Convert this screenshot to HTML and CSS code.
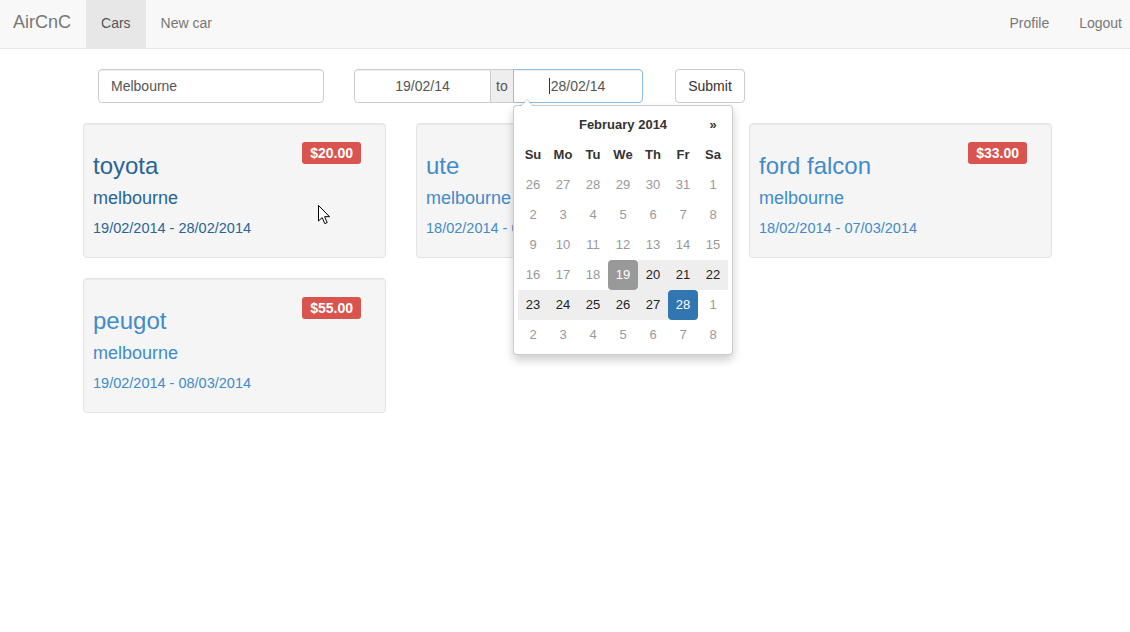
FILE: index.html
```html
<!DOCTYPE html>
<html>
<head>
<meta charset="utf-8">
<title>AirCnC</title>
<link rel="stylesheet" href="styles.css">
</head>
<body>
<nav class="navbar">
  <a class="brand" href="#">AirCnC</a>
  <ul class="nav">
    <li><a class="active" href="#">Cars</a></li>
    <li><a href="#">New car</a></li>
  </ul>
  <ul class="nav nav-right">
    <li><a href="#">Profile</a></li>
    <li><a href="#">Logout</a></li>
  </ul>
</nav>

<form class="search">
  <input class="field city" type="text" value="Melbourne">
  <div class="daterange">
    <input class="field date date-start" type="text" value="19/02/14">
    <span class="addon">to</span>
    <div class="date-end-wrap">
      <input class="field date date-end" type="text" value="28/02/14">
      <span class="caret-line"></span>
    </div>
    <div class="datepicker">
      <table>
        <colgroup><col class="day-col"><col class="day-col"><col class="day-col"><col class="day-col"><col class="day-col"><col class="day-col"><col class="day-col"></colgroup>
        <thead>
          <tr class="title-row"><th></th><th colspan="5" class="month">February 2014</th><th class="next">»</th></tr>
          <tr class="dow"><th>Su</th><th>Mo</th><th>Tu</th><th>We</th><th>Th</th><th>Fr</th><th>Sa</th></tr>
        </thead>
        <tbody>
          <tr><td class="muted">26</td><td class="muted">27</td><td class="muted">28</td><td class="muted">29</td><td class="muted">30</td><td class="muted">31</td><td class="muted">1</td></tr>
          <tr><td class="muted">2</td><td class="muted">3</td><td class="muted">4</td><td class="muted">5</td><td class="muted">6</td><td class="muted">7</td><td class="muted">8</td></tr>
          <tr><td class="muted">9</td><td class="muted">10</td><td class="muted">11</td><td class="muted">12</td><td class="muted">13</td><td class="muted">14</td><td class="muted">15</td></tr>
          <tr><td class="muted">16</td><td class="muted">17</td><td class="muted">18</td><td class="sel-start">19</td><td class="range">20</td><td class="range">21</td><td class="range">22</td></tr>
          <tr><td class="range">23</td><td class="range">24</td><td class="range">25</td><td class="range">26</td><td class="range">27</td><td class="sel-end">28</td><td class="muted">1</td></tr>
          <tr><td class="muted">2</td><td class="muted">3</td><td class="muted">4</td><td class="muted">5</td><td class="muted">6</td><td class="muted">7</td><td class="muted">8</td></tr>
        </tbody>
      </table>
    </div>
  </div>
  <button class="btn" type="button">Submit</button>
</form>

<main class="cars">
  <div class="card">
    <span class="price">$20.00</span>
    <a class="car-name hover" href="#">toyota</a>
    <a class="car-city hover" href="#">melbourne</a>
    <a class="car-dates hover" href="#">19/02/2014 - 28/02/2014</a>
    <svg class="cursor" width="13" height="20" viewBox="0 0 13 20"><path d="M0.5 0.5 L0.5 16 L4.2 12.6 L6.8 18.6 L9.2 17.6 L6.6 11.7 L11.5 11.7 Z" fill="#fff" stroke="#000" stroke-width="1"/></svg>
  </div>
  <div class="card">
    <span class="price">$45.00</span>
    <a class="car-name" href="#">ute</a>
    <a class="car-city" href="#">melbourne</a>
    <a class="car-dates" href="#">18/02/2014 - 06/03/2014</a>
  </div>
  <div class="card">
    <span class="price">$33.00</span>
    <a class="car-name" href="#">ford falcon</a>
    <a class="car-city" href="#">melbourne</a>
    <a class="car-dates" href="#">18/02/2014 - 07/03/2014</a>
  </div>
  <div class="card">
    <span class="price">$55.00</span>
    <a class="car-name" href="#">peugot</a>
    <a class="car-city" href="#">melbourne</a>
    <a class="car-dates" href="#">19/02/2014 - 08/03/2014</a>
  </div>
</main>
</body>
</html>
```

FILE: styles.css
```css
* { box-sizing: border-box; }

body {
  margin: 0;
  font-family: "Liberation Sans", Arial, sans-serif;
  font-size: 14px;
  line-height: 20px;
  color: #333;
  background: #fff;
}

a { text-decoration: none; }

/* navbar */
.navbar {
  display: flex;
  height: 49px;
  background: #f8f8f8;
  border-bottom: 1px solid #e7e7e7;
}
.brand {
  padding: 12px 15px 16px 13px;
  font-size: 18px;
  line-height: 20px;
  color: #777;
}
.nav {
  display: flex;
  list-style: none;
  margin: 0;
  padding: 0;
}
.nav a {
  display: block;
  padding: 13px 15px 15px;
  line-height: 20px;
  color: #777;
}
.nav a.active {
  background: #e7e7e7;
  color: #555;
}
.nav-right {
  margin-left: auto;
  margin-right: -7px;
}

/* search form */
.search {
  display: flex;
  align-items: flex-start;
  margin: 20px 0 20px;
  padding-left: 98px;
}
.field {
  height: 34px;
  padding: 6px 12px;
  font-family: inherit;
  font-size: 14px;
  line-height: 20px;
  color: #555;
  background: #fff;
  border: 1px solid #ccc;
  border-radius: 4px;
  box-shadow: inset 0 1px 1px rgba(0,0,0,.075);
  outline: none;
}
.city { width: 226px; }
.daterange {
  position: relative;
  display: flex;
  margin-left: 30px;
}
.date { text-align: center; }
.date-start {
  width: 137px;
  border-radius: 4px 0 0 4px;
}
.addon {
  width: 22px;
  height: 34px;
  padding: 6px 0 0 5px;
  background: #eee;
  border-top: 1px solid #ccc;
  border-bottom: 1px solid #ccc;
  color: #555;
}
.date-end-wrap { position: relative; }
.date-end {
  width: 130px;
  border-radius: 0 4px 4px 0;
  border-color: #8fbde6;
}
.caret-line {
  position: absolute;
  left: 36px;
  top: 9px;
  width: 1px;
  height: 16px;
  background: #333;
}
.btn {
  margin-left: 32px;
  width: 70px;
  height: 34px;
  padding: 6px 0;
  font-family: inherit;
  font-size: 14px;
  line-height: 20px;
  color: #333;
  background: #fff;
  border: 1px solid #ccc;
  border-radius: 4px;
}

/* datepicker dropdown */
.datepicker {
  position: absolute;
  left: 159px;
  top: 36px;
  z-index: 10;
  width: 220px;
  padding: 4px;
  background: #fff;
  border: 1px solid rgba(0,0,0,.2);
  border-radius: 4px;
  box-shadow: 0 5px 10px rgba(0,0,0,.2);
}
.datepicker::before {
  content: "";
  position: absolute;
  top: -7px;
  left: 6px;
  border-left: 7px solid transparent;
  border-right: 7px solid transparent;
  border-bottom: 7px solid rgba(0,0,0,.2);
}
.datepicker::after {
  content: "";
  position: absolute;
  top: -6px;
  left: 7px;
  border-left: 6px solid transparent;
  border-right: 6px solid transparent;
  border-bottom: 6px solid #fff;
}
.datepicker table {
  width: 210px;
  table-layout: fixed;
  border-collapse: collapse;
  border-spacing: 0;
  font-size: 13px;
}
.day-col { width: 30px; }
.datepicker th,
.datepicker td {
  height: 30px;
  padding: 0;
  text-align: center;
  line-height: 20px;
  white-space: nowrap;
}
.datepicker th { font-weight: bold; color: #333; }
.datepicker td { color: #222; }
.datepicker td.muted { color: #999; }
.datepicker td.range { background: #eee; }
.datepicker td.sel-start {
  background: #999;
  color: #fff;
  border-radius: 4px;
}
.datepicker td.sel-end {
  background: #3276b1;
  color: #fff;
  border-radius: 4px;
}

/* car cards */
.cars {
  display: grid;
  grid-template-columns: repeat(3, 303px);
  column-gap: 30px;
  row-gap: 20px;
  padding-left: 83px;
}
.card {
  position: relative;
  height: 135px;
  padding: 18px 24px 0 9px;
  background: #f5f5f5;
  border: 1px solid #e3e3e3;
  border-radius: 4px;
  box-shadow: inset 0 1px 1px rgba(0,0,0,.05);
}
.price {
  float: right;
  height: 22px;
  padding: 0 8px;
  font-size: 14px;
  line-height: 22px;
  font-weight: bold;
  color: #fff;
  background: #d9534f;
  border-radius: 3px;
}
.car-name,
.car-city,
.car-dates {
  display: block;
  color: #428bca;
}
.car-name {
  margin-top: 11px;
  font-size: 24px;
  line-height: 26px;
}
.car-city {
  margin-top: 9px;
  font-size: 18px;
  line-height: 20px;
}
.car-dates {
  margin-top: 10px;
  font-size: 14.5px;
  line-height: 20px;
}
.card .hover { color: #2a6496; }
.cursor {
  position: absolute;
  left: 234px;
  top: 81px;
}
```
